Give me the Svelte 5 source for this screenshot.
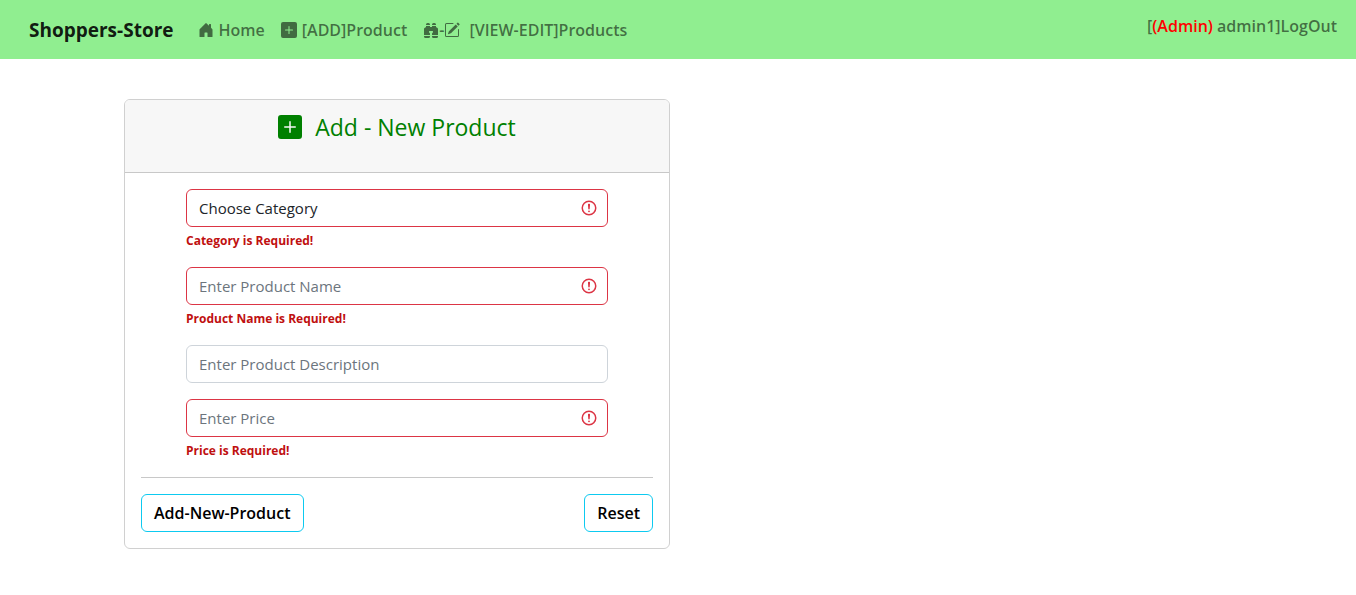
<script>
  const icons = {
    house: 'M6.5 14.5v-3.505c0-.245.25-.495.5-.495h2c.25 0 .5.25.5.5v3.5a.5.5 0 0 0 .5.5h4a.5.5 0 0 0 .5-.5v-7a.5.5 0 0 0-.146-.354L13 5.793V2.5a.5.5 0 0 0-.5-.5h-1a.5.5 0 0 0-.5.5v1.293L8.354 1.146a.5.5 0 0 0-.708 0l-6 6A.5.5 0 0 0 1.5 7.5v7a.5.5 0 0 0 .5.5h4a.5.5 0 0 0 .5-.5Z',
    plus: 'M2 0a2 2 0 0 0-2 2v12a2 2 0 0 0 2 2h12a2 2 0 0 0 2-2V2a2 2 0 0 0-2-2H2zm6.5 4.5v3h3a.5.5 0 0 1 0 1h-3v3a.5.5 0 0 1-1 0v-3h-3a.5.5 0 0 1 0-1h3v-3a.5.5 0 0 1 1 0z',
    binoculars: 'M4.5 1A1.5 1.5 0 0 0 3 2.5V3h4v-.5A1.5 1.5 0 0 0 5.5 1h-1zM7 4v1h2V4h4v.882a.5.5 0 0 0 .276.447l.895.447A1.5 1.5 0 0 1 15 7.118V13H9v-1.5a.5.5 0 0 1 .146-.354l.854-.853V9.5a.5.5 0 0 0-.5-.5h-3a.5.5 0 0 0-.5.5v.793l.854.853A.5.5 0 0 1 7 11.5V13H1V7.118a1.5 1.5 0 0 1 .83-1.342l.894-.447A.5.5 0 0 0 3 4.882V4h4zM1 14v.5A1.5 1.5 0 0 0 2.5 16h3A1.5 1.5 0 0 0 7 14.5V14H1zm8 0v.5a1.5 1.5 0 0 0 1.5 1.5h3a1.5 1.5 0 0 0 1.5-1.5V14H9zm4-11H9v-.5A1.5 1.5 0 0 1 10.5 1h1A1.5 1.5 0 0 1 13 2.5V3z',
    pencil: 'M15.502 1.94a.5.5 0 0 1 0 .706L14.459 3.69l-2-2L13.502.646a.5.5 0 0 1 .707 0l1.293 1.293zm-1.75 2.456-2-2L4.939 9.21a.5.5 0 0 0-.121.196l-.805 2.414a.25.25 0 0 0 .316.316l2.414-.805a.5.5 0 0 0 .196-.12l6.813-6.814zM1 13.5A1.5 1.5 0 0 0 2.5 15h11a1.5 1.5 0 0 0 1.5-1.5v-6a.5.5 0 0 0-1 0v6a.5.5 0 0 1-.5.5h-11a.5.5 0 0 1-.5-.5v-11a.5.5 0 0 1 .5-.5H9a.5.5 0 0 0 0-1H2.5A1.5 1.5 0 0 0 1 2.5v11z',
  };

  const fields = [
    { id: 'category', label: 'Choose Category', kind: 'select', error: 'Category is Required!' },
    { id: 'name', label: 'Enter Product Name', error: 'Product Name is Required!' },
    { id: 'description', label: 'Enter Product Description' },
    { id: 'price', label: 'Enter Price', error: 'Price is Required!' },
  ];
</script>

{#snippet icon(name)}
  <svg class="icon" viewBox="0 0 16 16" aria-hidden="true"><path d={icons[name]} /></svg>
{/snippet}

<header class="navbar">
  <a class="brand" href="#home">Shoppers-Store</a>
  <nav class="links">
    <a href="#home">{@render icon('house')}<span>Home</span></a>
    <a href="#add">{@render icon('plus')}<span>[ADD]Product</span></a>
    <a href="#products" class="view">
      <span class="pair">{@render icon('binoculars')}-{@render icon('pencil')}</span>
      <span>[VIEW-EDIT]Products</span>
    </a>
  </nav>
  <a class="logout" href="#logout">[<span class="role">(Admin)</span> admin1]LogOut</a>
</header>

<main class="page">
  <section class="card">
    <h1 class="card-header">{@render icon('plus')}<span>Add - New Product</span></h1>
    <form class="card-body" novalidate onsubmit={(e) => e.preventDefault()}>
      <div class="fields">
        {#each fields as field (field.id)}
          <div class="field">
            {#if field.kind === 'select'}
              <select class="control invalid" id={field.id} aria-label={field.label} aria-describedby="{field.id}-error">
                <option value="">{field.label}</option>
              </select>
            {:else}
              <input
                class="control"
                class:invalid={field.error}
                id={field.id}
                type="text"
                aria-label={field.label}
                placeholder={field.label}
              />
            {/if}
            {#if field.error}
              <div class="error" id="{field.id}-error">{field.error}</div>
            {/if}
          </div>
        {/each}
      </div>
      <hr />
      <div class="actions">
        <button type="submit">Add-New-Product</button>
        <button type="reset">Reset</button>
      </div>
    </form>
  </section>
</main>

<style>
  :global(body) {
    margin: 0;
    background: #fff;
    color: #212529;
    font: 15px/24px "Open Sans", "Noto Sans", sans-serif;
  }

  .icon {
    width: 16px;
    height: 16px;
    flex: none;
    fill: currentColor;
  }

  .navbar {
    display: flex;
    align-items: center;
    box-sizing: border-box;
    min-height: 59px;
    padding: 8px 19px 8px 29px;
    background: lightgreen;
    font-size: 16px;
    font-weight: 600;
  }

  .navbar a {
    color: rgba(0, 0, 0, 0.55);
    text-decoration: none;
    white-space: nowrap;
  }

  .navbar .brand {
    margin-right: 24px;
    color: rgba(0, 0, 0, 0.9);
    font-size: 19px;
    font-weight: 700;
    line-height: 30px;
  }

  .links {
    display: flex;
    gap: 16px;
  }

  .links a {
    display: flex;
    align-items: center;
    gap: 5px;
  }

  .links .view {
    gap: 9px;
  }

  .pair {
    display: flex;
    align-items: center;
  }

  .navbar .logout {
    align-self: flex-start;
    margin-left: auto;
    padding: 6px 0;
  }

  .role {
    color: red;
  }

  .page {
    display: grid;
    grid-template-columns: 1fr 1fr;
    gap: 16px;
    max-width: 1108px;
    margin: 40px auto;
  }

  .card {
    border: 1px solid #d0d0d0;
    border-radius: 6px;
    overflow: hidden;
  }

  .card-header {
    display: flex;
    justify-content: center;
    align-items: center;
    gap: 13px;
    margin: 0;
    padding: 8px 16px 26px;
    border-bottom: 1px solid #c8c8c8;
    background: #f7f7f7;
    color: green;
    font-size: 23px;
    font-weight: 400;
    line-height: 38px;
  }

  .card-header .icon {
    width: 24px;
    height: 24px;
  }

  .card-body {
    padding: 16px;
  }

  .fields {
    padding: 0 45px;
  }

  .field {
    margin-bottom: 16px;
  }

  .control {
    display: block;
    box-sizing: border-box;
    width: 100%;
    height: 38px;
    padding: 6px 12px;
    border: 1px solid #ced4da;
    border-radius: 6px;
    background: #fff;
    color: #212529;
    font: inherit;
    appearance: none;
  }

  .control::placeholder {
    color: #6c757d;
    opacity: 1;
  }

  .control.invalid {
    padding-right: 36px;
    border-color: #dc3545;
    background: #fff url("data:image/svg+xml,%3csvg xmlns='http://www.w3.org/2000/svg' viewBox='0 0 12 12' fill='none' stroke='%23dc3545'%3e%3ccircle cx='6' cy='6' r='4.5'/%3e%3cpath stroke-linejoin='round' d='M5.8 3.6h.4L6 6.5z'/%3e%3ccircle cx='6' cy='8.2' r='.6' fill='%23dc3545' stroke='none'/%3e%3c/svg%3e") no-repeat right 9px center / 18px 18px;
  }

  .error {
    padding-top: 4px;
    color: #bf1010;
    font-size: 12px;
    font-weight: 700;
    line-height: 20px;
  }

  hr {
    height: 1px;
    margin: 0 0 16px;
    border: 0;
    background: #c8c8c8;
  }

  .actions {
    display: flex;
    justify-content: space-between;
  }

  button {
    padding: 6px 12px;
    border: 1px solid #0dcaf0;
    border-radius: 6px;
    background: #fff;
    color: #000;
    font: inherit;
    font-size: 16px;
    font-weight: 600;
    cursor: pointer;
  }
</style>
